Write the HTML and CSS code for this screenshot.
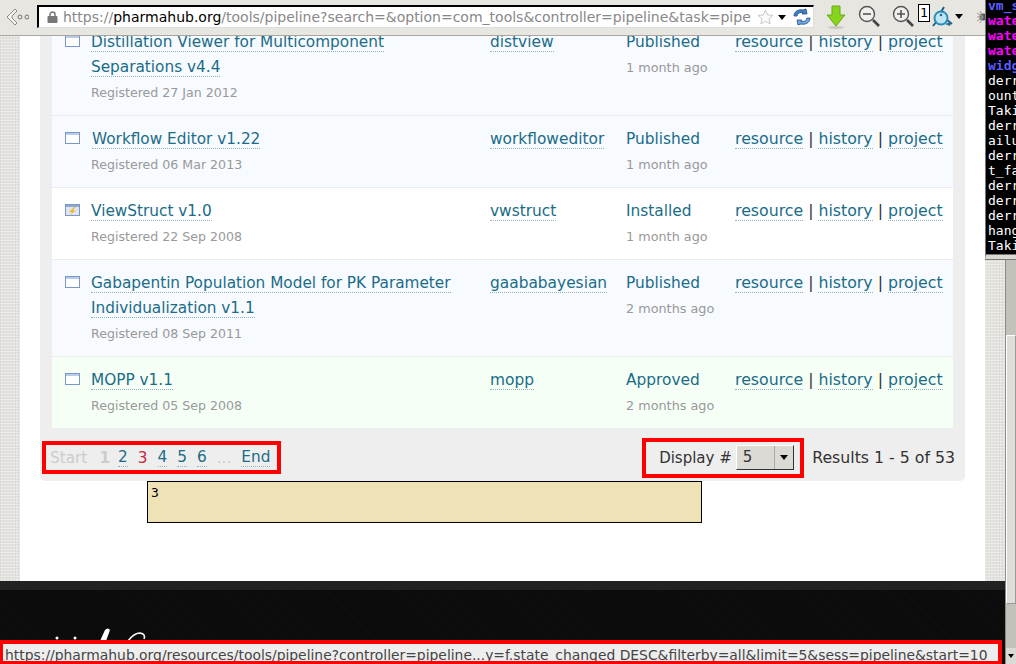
FILE: index.html
```html
<!DOCTYPE html>
<html lang="en">
<head>
<meta charset="UTF-8" />
<title>Pipeline - pharmaHUB</title>
<link rel="stylesheet" href="styles.css">
</head>
<body>
<div class="browser">

  <!-- Browser toolbar -->
  <header class="toolbar">
    <svg class="back-icon" width="24" height="22" viewBox="0 0 24 22">
      <path d="M10 3 L2 11 L10 19 L12 17 L7 12 L7 10 L12 5 Z" fill="#f4f2ee" stroke="#8d8b86" stroke-width="1"/>
      <circle cx="15" cy="11" r="2" fill="none" stroke="#77756f"/>
      <circle cx="22" cy="11" r="2" fill="none" stroke="#77756f"/>
    </svg>
    <div class="url-field">
      <svg class="lock-icon" width="11" height="12" viewBox="0 0 11 12">
        <path d="M3 6 V3.5 a2.5 2.5 0 0 1 5 0 V6" fill="none" stroke="#777" stroke-width="1.5"/>
        <rect x="0.5" y="5" width="10" height="7" rx="1" fill="#777"/>
      </svg>
      <span class="url-text">https://<b>pharmahub.org</b>/tools/pipeline?search=&amp;option=com_tools&amp;controller=pipeline&amp;task=pipe</span>
      <svg class="star-icon" width="17" height="16" viewBox="0 0 17 16">
        <path d="M8.5 1 L10.6 6 L16 6.4 L11.9 9.9 L13.2 15 L8.5 12.3 L3.8 15 L5.1 9.9 L1 6.4 L6.4 6 Z" fill="#fbfbfb" stroke="#c9c9c9"/>
      </svg>
      <span class="drop-arrow"></span>
      <svg class="refresh-icon" width="18" height="18" viewBox="0 0 18 18">
        <path d="M1 8 C1 3 6 1 10 2 L13 1 L14 6 L9 6 L10 4.5 C7 4 4.5 5 4 8 Z" fill="#3f7fc4" stroke="#1f4f8c" stroke-width="0.8"/>
        <path d="M17 10 C17 15 12 17 8 16 L5 17 L4 12 L9 12 L8 13.5 C11 14 13.5 13 14 10 Z" fill="#6fa6dc" stroke="#1f4f8c" stroke-width="0.8"/>
      </svg>
    </div>
    <svg class="down-icon" width="20" height="24" viewBox="0 0 20 24">
      <ellipse cx="10" cy="22.5" rx="8" ry="1.5" fill="#c9c6c0"/>
      <path d="M6 1 H14 V10 H19 L10 21 L1 10 H6 Z" fill="#86d41c" stroke="#6aa81a"/>
    </svg>
    <svg class="zoom-out-icon" width="23" height="23" viewBox="0 0 23 23">
      <circle cx="9" cy="9" r="7.5" fill="#f1efeb" stroke="#555" stroke-width="1.4"/>
      <path d="M5 9 H13" stroke="#555" stroke-width="1.6"/>
      <path d="M15 15 L21 21" stroke="#444" stroke-width="2.6"/>
    </svg>
    <svg class="zoom-in-icon" width="23" height="23" viewBox="0 0 23 23">
      <circle cx="9" cy="9" r="7.5" fill="#f1efeb" stroke="#555" stroke-width="1.4"/>
      <path d="M5 9 H13 M9 5 V13" stroke="#555" stroke-width="1.6"/>
      <path d="M15 15 L21 21" stroke="#444" stroke-width="2.6"/>
    </svg>
    <span class="count-box">1</span>
    <svg class="mouse-icon" width="22" height="22" viewBox="0 0 22 22">
      <path d="M13 1 L10 6 M2 20 L6 15 M16 14 L21 18" stroke="#1c5f8a" stroke-width="2"/>
      <path d="M14 18 L20 16 L19 20 Z" fill="#1c6f9c"/>
      <circle cx="10" cy="12" r="6.5" fill="#bfe6f5" stroke="#2a8cb8" stroke-width="2"/>
      <circle cx="10" cy="9" r="1.2" fill="#1c5f8a"/>
    </svg>
    <span class="drop-arrow"></span>
    <svg class="spider-icon" width="9" height="14" viewBox="0 0 9 14">
      <circle cx="6" cy="7" r="3.5" fill="#555"/>
      <path d="M6 7 L0 3 M6 7 L0 7 M6 7 L0 11 M6 7 L3 1 M6 7 L3 13" stroke="#999"/>
    </svg>
  </header>

  <div class="viewport">
    <div class="page">
      <main class="content">
        <section class="panel">
          <div class="rows">

            <article class="row row-blue">
              <svg class="app-icon" width="15" height="12" viewBox="0 0 15 12"><rect x="0.5" y="0.5" width="14" height="11" fill="#fff" stroke="#7b96c8"/><rect x="1" y="1" width="13" height="2" fill="#b9cbe8"/></svg>
              <div class="title-cell">
                <a class="title-link" href="#">Distillation Viewer for Multicomponent</a><br>
                <a class="title-link" href="#">Separations v4.4</a>
                <p class="meta meta-title">Registered 27 Jan 2012</p>
              </div>
              <div><a class="alias-link" href="#">distview</a></div>
              <div><span class="status">Published</span><p class="meta">1 month ago</p></div>
              <div class="links"><a href="#">resource</a> | <a href="#">history</a> | <a href="#">project</a></div>
            </article>

            <article class="row row-blue">
              <svg class="app-icon" width="15" height="12" viewBox="0 0 15 12"><rect x="0.5" y="0.5" width="14" height="11" fill="#fff" stroke="#7b96c8"/><rect x="1" y="1" width="13" height="2" fill="#b9cbe8"/></svg>
              <div class="title-cell">
                <a class="title-link title-nudge" href="#">Workflow Editor v1.22</a>
                <p class="meta meta-title">Registered 06 Mar 2013</p>
              </div>
              <div><a class="alias-link" href="#">workfloweditor</a></div>
              <div><span class="status">Published</span><p class="meta">1 month ago</p></div>
              <div class="links"><a href="#">resource</a> | <a href="#">history</a> | <a href="#">project</a></div>
            </article>

            <article class="row row-white">
              <svg class="app-icon" width="15" height="12" viewBox="0 0 15 12"><rect x="0.5" y="0.5" width="14" height="11" fill="#dfe6f2" stroke="#7b96c8"/><rect x="1" y="1" width="13" height="2" fill="#8fa9d6"/><path d="M9 3 L4 8 H7 L5 11 L11 6.5 H8 L10.5 3 Z" fill="#f2b632"/></svg>
              <div class="title-cell">
                <a class="title-link" href="#">ViewStruct v1.0</a>
                <p class="meta meta-title">Registered 22 Sep 2008</p>
              </div>
              <div><a class="alias-link" href="#">vwstruct</a></div>
              <div><span class="status">Installed</span><p class="meta">1 month ago</p></div>
              <div class="links"><a href="#">resource</a> | <a href="#">history</a> | <a href="#">project</a></div>
            </article>

            <article class="row row-blue">
              <svg class="app-icon" width="15" height="12" viewBox="0 0 15 12"><rect x="0.5" y="0.5" width="14" height="11" fill="#fff" stroke="#7b96c8"/><rect x="1" y="1" width="13" height="2" fill="#b9cbe8"/></svg>
              <div class="title-cell">
                <a class="title-link" href="#">Gabapentin Population Model for PK Parameter</a><br>
                <a class="title-link" href="#">Individualization v1.1</a>
                <p class="meta meta-title">Registered 08 Sep 2011</p>
              </div>
              <div><a class="alias-link" href="#">gaababayesian</a></div>
              <div><span class="status">Published</span><p class="meta">2 months ago</p></div>
              <div class="links"><a href="#">resource</a> | <a href="#">history</a> | <a href="#">project</a></div>
            </article>

            <article class="row row-green">
              <svg class="app-icon" width="15" height="12" viewBox="0 0 15 12"><rect x="0.5" y="0.5" width="14" height="11" fill="#fff" stroke="#7b96c8"/><rect x="1" y="1" width="13" height="2" fill="#b9cbe8"/></svg>
              <div class="title-cell">
                <a class="title-link" href="#">MOPP v1.1</a>
                <p class="meta meta-title">Registered 05 Sep 2008</p>
              </div>
              <div><a class="alias-link" href="#">mopp</a></div>
              <div><span class="status">Approved</span><p class="meta">2 months ago</p></div>
              <div class="links"><a href="#">resource</a> | <a href="#">history</a> | <a href="#">project</a></div>
            </article>

          </div>

          <footer class="list-footer">
            <nav class="pager marked">
              <span class="off">Start</span>
              <span class="off strong">1</span>
              <a href="#">2</a>
              <span class="current">3</span>
              <a href="#">4</a>
              <a href="#">5</a>
              <a href="#">6</a>
              <span class="off">...</span>
              <a href="#">End</a>
            </nav>
            <div class="display marked">
              <span>Display #</span>
              <div class="select-box">
                <span class="select-value">5</span>
                <span class="select-button"><span class="drop-arrow"></span></span>
              </div>
            </div>
            <span class="results">Results 1 - 5 of 53</span>
          </footer>
        </section>

        <div class="note">3</div>
      </main>

      <footer class="site-footer">
        <svg class="site-logo" width="100" height="14" viewBox="0 0 100 14">
          <circle cx="7" cy="10" r="1.5" fill="#fff"/>
          <circle cx="25" cy="10" r="1.5" fill="#fff"/>
          <path d="M50 13 L55 2 Q58 -1 60 2 L56 13 Z" fill="#fff"/>
          <path d="M78 13 Q84 5 90 5 Q96 6 94 11" fill="none" stroke="#fff" stroke-width="1.5"/>
        </svg>
      </footer>
    </div>

    <div class="scrollbar">
      <div class="scroll-track"></div>
      <div class="scroll-thumb"></div>
      <div class="scroll-track scroll-low"></div>
      <div class="scroll-btn"><span class="drop-arrow"></span></div>
    </div>
  </div>

  <!-- Terminal window that lies over the browser -->
  <pre class="terminal"><b class="t-blue">vm_s</b>
<b class="t-pink">wate</b>
<b class="t-pink">wate</b>
<b class="t-pink">wate</b>
<b class="t-blue">widg</b>
derr
ount
Taki
derr
ailu
derr
t_fa
derr
derr
derr
hang
Taki</pre>

  <!-- Link target shown over the page -->
  <div class="status-bar">https://pharmahub.org/resources/tools/pipeline?controller=pipeline...y=f.state_changed DESC&amp;filterby=all&amp;limit=5&amp;sess=pipeline&amp;start=10</div>
</div>
</body>
</html>
```
FILE: styles.css
```css
/* Basic reset */
* {
  box-sizing: border-box;
}

html, body {
  margin: 0;
  height: 100vh;
  overflow: hidden;
  font-family: "DejaVu Sans", sans-serif;
}

p {
  margin: 0;
}

.browser {
  position: relative;
  display: flex;
  flex-direction: column;
  height: 664px;
  overflow: hidden;
}

/* Toolbar */
.toolbar {
  position: relative;
  z-index: 2;
  flex: none;
  display: flex;
  align-items: center;
  height: 36px;
  padding: 0 0 2px 5px;
  background: #e8e6e1;
  border-bottom: 1px solid #a8a69f;
}

.url-field {
  display: flex;
  align-items: center;
  width: 777px;
  height: 23px;
  margin-left: 8px;
  padding-left: 8px;
  background: #fff;
  border: 2px solid #000;
  border-right: 1px solid #ddd;
  border-bottom: 1px solid #ddd;
}

.url-text {
  width: 694px;
  margin-left: 5px;
  font-size: 14px;
  color: #888;
  white-space: nowrap;
}

.url-text b {
  font-weight: 400;
  color: #000;
}

.star-icon {
  flex: none;
}

.drop-arrow {
  display: inline-block;
  width: 0;
  height: 0;
  border-left: 4.5px solid transparent;
  border-right: 4.5px solid transparent;
  border-top: 5px solid #000;
}

.url-field .drop-arrow {
  margin-left: 4px;
}

.refresh-icon {
  margin-left: 7px;
}

.down-icon {
  margin-left: 12px;
}

.zoom-out-icon {
  margin-left: 12px;
}

.zoom-in-icon {
  margin-left: 11px;
}

.count-box {
  align-self: flex-start;
  width: 12px;
  height: 18px;
  margin: 4px 0 0 3px;
  font: 13px/16px "DejaVu Sans Mono", monospace;
  text-align: center;
  background: #fff;
  border: 1px solid #000;
}

.mouse-icon {
  margin-left: 1px;
}

.toolbar > .drop-arrow {
  margin-left: 2px;
}

.spider-icon {
  margin-left: 14px;
}

/* Page under the toolbar */
.viewport {
  flex: 1;
  display: flex;
  min-height: 0;
}

.page {
  flex: 1;
  display: flex;
  flex-direction: column;
  background-color: #e4e3df;
  background-image:
    repeating-linear-gradient(0deg, rgba(255,255,255,0.35) 0 1px, transparent 1px 3px),
    repeating-linear-gradient(90deg, rgba(0,0,0,0.05) 0 1px, transparent 1px 3px);
}

.content {
  flex: none;
  height: 545px;
  margin: 0 20px;
  padding: 0 20px;
  background: #fff;
  overflow: hidden;
}

.panel {
  margin-top: -17px;
  background: #eee;
  border-radius: 0 0 5px 5px;
}

.rows {
  margin: 0 12px;
}

.row {
  display: grid;
  grid-template-columns: 39px 399px 136px 109px 1fr;
  padding: 11px 0 10px;
  border-bottom: 1px solid #eaecef;
  font-size: 15.4px;
  line-height: 25px;
  color: #333;
}

.row-blue {
  background: #f7faff;
}

.row-white {
  background: #fff;
}

.row-green {
  background: #f6fff6;
}

.app-icon {
  margin: 5px 0 0 13px;
}

.row a {
  color: #1a6c87;
  text-decoration: none;
  border-bottom: 1px dotted #8fb3bf;
}

.title-link {
  font-size: 15.3px;
}

.title-nudge {
  margin-left: 1px;
}

.status {
  color: #1a6c87;
}

.meta {
  font-size: 12.8px;
  color: #999;
}

.meta-title {
  font-size: 12.6px;
}

.links {
  margin-top: -1px;
  font-size: 15.75px;
  white-space: nowrap;
}

/* Pagination and result count */
.list-footer {
  display: flex;
  align-items: center;
  height: 52px;
  padding: 5px 10px 0 2px;
  font-size: 15px;
  color: #333;
}

.marked {
  border: 4px solid #f00;
}

.pager {
  display: flex;
  align-items: center;
  gap: 10px;
  width: 239px;
  height: 33px;
  padding-left: 4px;
  font-size: 15.3px;
  white-space: nowrap;
}

.pager a {
  color: #1a6c87;
  text-decoration: none;
  border-bottom: 1px dotted #8fb3bf;
}

.pager .off {
  color: #ccc;
}

.pager .strong {
  margin: 0 -2px 0 2px;
  font-weight: 700;
}

.pager .current {
  color: #c8283c;
}

.display {
  display: flex;
  align-items: center;
  gap: 4px;
  width: 162px;
  height: 40px;
  margin-left: auto;
  padding-left: 13px;
  white-space: nowrap;
}

.select-box {
  display: flex;
  width: 58px;
  height: 25px;
  background: #dcdad5;
  border: 1px solid;
  border-color: #fff #333 #333 #fff;
}

.select-value {
  flex: 1;
  padding-left: 6px;
  line-height: 23px;
  border-right: 1px solid #aaa;
}

.select-button {
  display: flex;
  align-items: center;
  justify-content: center;
  width: 18px;
}

.results {
  margin-left: 8px;
  font-size: 15.75px;
  white-space: nowrap;
}

.note {
  width: 555px;
  height: 42px;
  margin-left: 107px;
  padding: 3px;
  font: 13px/16px "DejaVu Sans Mono", monospace;
  background: #efe2b6;
  border: 1px solid #000;
}

/* Dark site footer */
.site-footer {
  flex: 1;
  display: flex;
  align-items: flex-start;
  padding: 38px 0 0 50px;
  background-color: #0b0b0b;
  background-image:
    repeating-linear-gradient(45deg, rgba(255,255,255,0.015) 0 1px, transparent 1px 3px);
  border-top: 9px solid #222;
}

/* Scrollbar */
.scrollbar {
  flex: none;
  display: flex;
  flex-direction: column;
  width: 11px;
  border-left: 1px solid #8d8b86;
}

.scroll-track {
  height: 299px;
  background: #c4c0ba;
}

.scroll-low {
  height: 44px;
}

.scroll-thumb {
  height: 269px;
  background: #e0ddd8;
  border: 1px solid #fff;
  border-right-color: #999;
  border-bottom-color: #999;
}

.scroll-btn {
  flex: 1;
  display: flex;
  align-items: center;
  justify-content: center;
  background: #dcdad5;
}

.scroll-btn .drop-arrow {
  border-left-width: 3.5px;
  border-right-width: 3.5px;
  border-top-width: 4px;
}

/* Terminal corner */
.terminal {
  position: absolute;
  z-index: 3;
  top: -2px;
  left: 985px;
  width: 31px;
  height: 261px;
  margin: 0;
  padding: 0 0 0 2px;
  overflow: hidden;
  font: 13px/15px "DejaVu Sans Mono", monospace;
  color: #fff;
  background: #000;
  border-left: 1px solid #777;
  border-bottom: 4px solid #dcdad5;
  box-shadow: 0 1px 0 #777, inset 0 -1px 0 #777;
}

.t-blue {
  color: #5c5cff;
}

.t-pink {
  color: #ff00ff;
}

/* Status overlay */
.status-bar {
  position: absolute;
  z-index: 3;
  left: 0;
  bottom: 0;
  width: 1002px;
  height: 24px;
  padding: 2px 0 0 2px;
  font-size: 13.88px;
  line-height: 18px;
  color: #444;
  white-space: nowrap;
  background: #eee;
  border: solid #f00;
  border-width: 4px 4px 3px 3px;
  overflow: hidden;
}
```
